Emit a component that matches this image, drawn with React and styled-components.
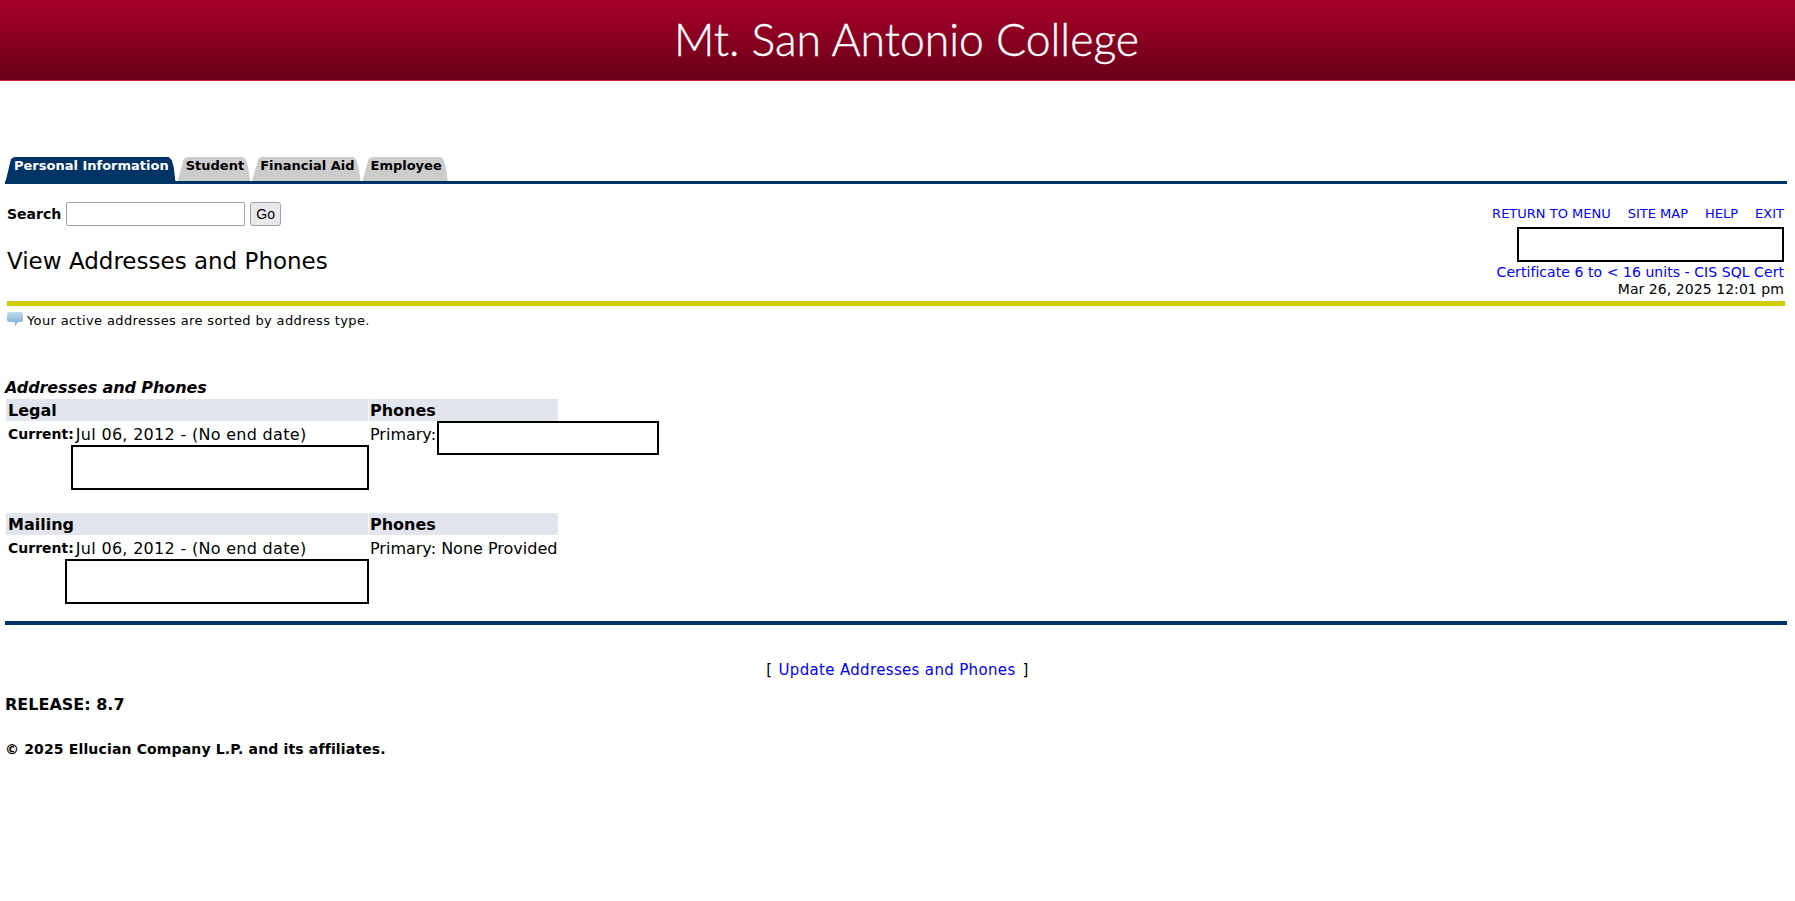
import { createGlobalStyle, styled } from "styled-components"

const GlobalStyle = createGlobalStyle`
  body {
    margin: 0;
    background: #fff;
    color: #000;
    font-family: "DejaVu Sans", Verdana, sans-serif;
    font-size: 16px;
  }
  a {
    color: #0000ff;
    text-decoration: none;
  }
`

const tabs = [
  { label: "Personal Information", active: true },
  { label: "Student" },
  { label: "Financial Aid" },
  { label: "Employee" },
]

const addresses = [
  { type: "Legal", boxLeft: 71, phone: null },
  { type: "Mailing", boxLeft: 65, phone: "None Provided" },
]

const Redacted = styled.div`
  box-sizing: border-box;
  border: 2px solid #000;
  background: #fff;
`

const ChatIcon = () => (
  <svg width="16" height="14" viewBox="0 0 16 14">
    <defs>
      <linearGradient id="bubble" x1="0" y1="0" x2="0" y2="1">
        <stop offset="0" stopColor="#c4dcec" />
        <stop offset="1" stopColor="#6fa6cf" />
      </linearGradient>
    </defs>
    <path d="M2 0h12a2 2 0 0 1 2 2v6a2 2 0 0 1-2 2h-3l-3 4v-4H2a2 2 0 0 1-2-2V2a2 2 0 0 1 2-2z" fill="url(#bubble)" />
  </svg>
)

export default function App() {
  return (
    <>
      <GlobalStyle />
      <Banner>
        <Logo>Mt. San Antonio College</Logo>
      </Banner>

      <TabBar>
        {tabs.map(tab => (
          <Tab key={tab.label} $active={tab.active}>{tab.label}</Tab>
        ))}
      </TabBar>

      <Heading>
        <div>
          <SearchRow>
            <SearchLabel>Search</SearchLabel>
            <SearchInput />
            <GoButton>Go</GoButton>
          </SearchRow>
          <Title>View Addresses and Phones</Title>
        </div>
        <RightCol>
          <LinkRow>
            <a href="#">RETURN TO MENU</a>
            <a href="#">SITE MAP</a>
            <a href="#">HELP</a>
            <a href="#">EXIT</a>
          </LinkRow>
          <NameBox />
          <a href="#">Certificate 6 to &lt; 16 units - CIS SQL Cert</a>
          <span>Mar 26, 2025 12:01 pm</span>
        </RightCol>
      </Heading>
      <YellowRule />

      <InfoText>
        <ChatIcon />
        <span>Your active addresses are sorted by address type.</span>
      </InfoText>

      <Caption>Addresses and Phones</Caption>
      <AddressList>
        {addresses.map(address => (
          <AddressGrid key={address.type}>
            <HeadCell>{address.type}</HeadCell>
            <HeadCell $phones>Phones</HeadCell>
            <AddressCell>
              <DateLine>
                <CurrentLabel>Current:</CurrentLabel>
                <DateText>Jul 06, 2012 - (No end date)</DateText>
              </DateLine>
              <AddressBox $left={address.boxLeft} />
            </AddressCell>
            <PhoneCell>
              <span>Primary:{address.phone ? ` ${address.phone}` : ""}</span>
              {!address.phone && <PhoneBox />}
            </PhoneCell>
          </AddressGrid>
        ))}
      </AddressList>
      <BlueRule />

      <UpdateLine>
        [<UpdateLink href="#">Update Addresses and Phones</UpdateLink>]
      </UpdateLine>
      <Release>RELEASE: 8.7</Release>
      <Copyright>© 2025 Ellucian Company L.P. and its affiliates.</Copyright>
    </>
  )
}

const Banner = styled.div`
  height: 80px;
  display: flex;
  justify-content: center;
  align-items: center;
  background: linear-gradient(#a80029, #680018);
  border-bottom: 1px solid #d8203c;
`

const Logo = styled.div`
  font-family: Lato, "Open Sans", sans-serif;
  font-weight: 300;
  font-size: 44.5px;
  color: #fff;
  -webkit-text-stroke: 0.4px #fff;
  margin: -4px 0 0 18px;
`

const TabBar = styled.div`
  display: flex;
  gap: 2px;
  margin: 76px 8px 0 5px;
  height: 24px;
  border-bottom: 3px solid #003366;
`

const Tab = styled.div`
  box-sizing: border-box;
  height: ${p => (p.$active ? "27px" : "24px")};
  padding: ${p => (p.$active ? "1px 7px 0 9px" : "1px 6px 0 8px")};
  font-size: 13px;
  font-weight: bold;
  color: ${p => (p.$active ? "#fff" : "#000")};
  background: ${p => (p.$active ? "#003366" : "#cccccc")};
  clip-path: polygon(0 100%, 5px 6px, 6px 2px, 9px 0, calc(100% - 7px) 0, calc(100% - 4px) 3px, calc(100% - 2px) 10px, 100% 100%);
`

const Heading = styled.div`
  display: flex;
  justify-content: space-between;
  margin: 18px 10px 0 7px;
  height: 99px;
`

const SearchRow = styled.div`
  display: flex;
  align-items: center;
  gap: 5px;
  height: 24px;
`

const SearchLabel = styled.span`
  font-size: 14px;
  font-weight: bold;
`

const SearchInput = styled.input`
  box-sizing: border-box;
  width: 179px;
  height: 24px;
  border: 1px solid #a0a0a8;
  border-radius: 2px;
`

const GoButton = styled.button`
  box-sizing: border-box;
  width: 31px;
  height: 24px;
  padding: 0;
  border: 1px solid #a0a0a8;
  border-radius: 3px;
  background: #e9e9ed;
  color: #000;
  font-family: "Liberation Sans", sans-serif;
  font-size: 14px;
`

const Title = styled.h2`
  margin: 22px 0 0;
  font-size: 23px;
  font-weight: normal;
`

const RightCol = styled.div`
  display: flex;
  flex-direction: column;
  align-items: flex-end;
  font-size: 14px;
  line-height: 17px;
  letter-spacing: 0.06px;
  padding-right: 1px;
`

const LinkRow = styled.div`
  display: flex;
  gap: 17px;
  font-size: 13px;
  letter-spacing: 0;
  line-height: 23px;
  height: 25px;
`

const NameBox = styled(Redacted)`
  width: 267px;
  height: 35px;
  margin-bottom: 2px;
`

const YellowRule = styled.div`
  height: 5px;
  margin: 0 10px 0 7px;
  background: #cfcc00;
`

const InfoText = styled.div`
  display: flex;
  align-items: flex-start;
  gap: 4px;
  margin: 6px 0 0 7px;
  font-size: 13px;
  letter-spacing: 0.37px;
  line-height: 17px;
  height: 17px;
`

const Caption = styled.div`
  margin: 50px 0 0 5px;
  height: 19px;
  line-height: 18px;
  font-size: 16px;
  letter-spacing: -0.1px;
  font-weight: bold;
  font-style: italic;
`

const AddressList = styled.div`
  display: flex;
  flex-direction: column;
  gap: 23px;
  margin: 1px 0 17px 6px;
`

const AddressGrid = styled.div`
  display: grid;
  grid-template-columns: 362px 189px;
  column-gap: 1px;
`

const HeadCell = styled.div`
  height: 22px;
  line-height: 24px;
  padding-left: ${p => (p.$phones ? "1px" : "2px")};
  background: #e3e5ee;
  font-size: 16px;
  font-weight: bold;
`

const AddressCell = styled.div`
  display: flex;
  flex-direction: column;
`

const DateLine = styled.div`
  display: flex;
  align-items: center;
  gap: 2px;
  height: 24px;
  padding-left: 2px;
`

const CurrentLabel = styled.span`
  font-size: 14px;
  font-weight: bold;
  padding-top: 1px;
`

const DateText = styled.span`
  letter-spacing: 0.3px;
  padding-top: 3px;
`

const AddressBox = styled(Redacted)`
  height: 45px;
  margin: 0 -1px 0 ${p => p.$left - 6}px;
`

const PhoneCell = styled.div`
  position: relative;
  padding: 4px 0 0 1px;
  line-height: 19px;
`

const PhoneBox = styled(Redacted)`
  position: absolute;
  left: 68px;
  top: 0;
  width: 222px;
  height: 34px;
`

const BlueRule = styled.div`
  height: 4px;
  margin: 0 8px 0 5px;
  background: #003366;
`

const UpdateLine = styled.div`
  margin-top: 36px;
  text-align: center;
  line-height: 18px;
  font-size: 15px;
  letter-spacing: 0.34px;
`

const UpdateLink = styled.a`
  margin: 0 7px 0 6px;
`

const Release = styled.div`
  margin: 17px 0 0 5px;
  line-height: 18px;
  font-size: 16px;
  font-weight: bold;
`

const Copyright = styled.div`
  margin: 26px 0 0 5px;
  line-height: 18px;
  font-size: 14px;
  letter-spacing: 0.15px;
  font-weight: bold;
`
